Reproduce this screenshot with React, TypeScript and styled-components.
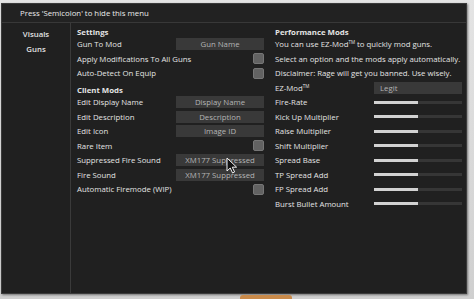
import React from "react";
import styled, { createGlobalStyle } from "styled-components";

const GlobalStyle = createGlobalStyle`
  html, body {
    margin: 0;
    padding: 0;
    background: #d4d4d4;
  }
  body {
    font-family: "Open Sans", "Liberation Sans", sans-serif;
  }
`;

const Page = styled.div`
  width: 474px;
  height: 299px;
  position: relative;
  overflow: hidden;
  background: linear-gradient(#e4e4e4, #cfcfcf);
`;

const Taskbar = styled.div`
  position: absolute;
  left: 240px;
  bottom: 0;
  width: 52px;
  height: 4px;
  background: #c98a4a;
  border-radius: 3px 3px 0 0;
`;

const Window = styled.div`
  margin-top: 3px;
  margin-left: 1px;
  width: 466px;
  height: 291px;
  background: #202020;
  border: 1px solid #3b3b3b;
  box-sizing: border-box;
  display: flex;
  flex-direction: column;
  box-shadow: 1px 1px 2px rgba(0, 0, 0, 0.45);
  color: #e4e4e4;
  font-size: 7.8px;
`;

const Header = styled.div`
  height: 18px;
  flex-shrink: 0;
  display: flex;
  align-items: center;
  padding-left: 18px;
  border-bottom: 1px solid #383838;
  background: #222;
  color: #ececec;
`;

const Body = styled.div`
  flex: 1;
  display: flex;
`;

const Sidebar = styled.div`
  width: 68px;
  flex-shrink: 0;
  border-right: 1px solid #3a3a3a;
  display: flex;
  flex-direction: column;
  align-items: center;
  padding-top: 4px;
`;

const Tab = styled.div`
  height: 14.5px;
  line-height: 14.5px;
  font-weight: 600;
`;

const Content = styled.div`
  flex: 1;
  display: grid;
  grid-template-columns: 187px 187px;
  column-gap: 11px;
  padding: 4px 0 0 6px;
  align-content: start;
`;

const Column = styled.div`
  display: flex;
  flex-direction: column;
`;

const Heading = styled.div<{ $gap?: boolean }>`
  height: 10px;
  line-height: 10px;
  font-weight: 700;
  margin-top: ${(p) => (p.$gap ? "4.5px" : "0")};
`;

const Row = styled.div`
  height: 14.5px;
  display: flex;
  align-items: center;
  justify-content: space-between;
  white-space: nowrap;
`;

const Tm = styled.sup`
  font-size: 4.5px;
  vertical-align: 3px;
  line-height: 0;
`;

const Field = styled.div<{ $left?: boolean }>`
  width: 88px;
  height: 12px;
  background: #393939;
  color: #b4b4b4;
  display: flex;
  align-items: center;
  justify-content: ${(p) => (p.$left ? "flex-start" : "center")};
  padding-left: ${(p) => (p.$left ? "6px" : "0")};
  box-sizing: border-box;
  overflow: hidden;
  white-space: nowrap;
`;

const Check = styled.div`
  width: 11px;
  height: 11px;
  border-radius: 2px;
  background: #626262;
  border: 1px solid #767676;
  box-sizing: border-box;
`;

const Track = styled.div`
  width: 88px;
  height: 3px;
  background: #363636;
  position: relative;
`;

const Fill = styled.div`
  height: 100%;
  background: #d2d2d2;
`;

const Cursor = styled.svg`
  position: absolute;
  left: 226px;
  top: 157px;
`;

type Item =
  | { label: string; kind: "field"; value: string }
  | { label: string; kind: "check" }
  | { label: string; kind: "text" };

const settings: Item[] = [
  { label: "Gun To Mod", kind: "field", value: "Gun Name" },
  { label: "Apply Modifications To All Guns", kind: "check" },
  { label: "Auto-Detect On Equip", kind: "check" },
];

const clientMods: Item[] = [
  { label: "Edit Display Name", kind: "field", value: "Display Name" },
  { label: "Edit Description", kind: "field", value: "Description" },
  { label: "Edit Icon", kind: "field", value: "Image ID" },
  { label: "Rare Item", kind: "check" },
  { label: "Suppressed Fire Sound", kind: "field", value: "XM177 Suppressed" },
  { label: "Fire Sound", kind: "field", value: "XM177 Suppressed" },
  { label: "Automatic Firemode (WIP)", kind: "check" },
];

const sliders = [
  "Fire-Rate",
  "Kick Up Multiplier",
  "Raise Multiplier",
  "Shift Multiplier",
  "Spread Base",
  "TP Spread Add",
  "FP Spread Add",
  "Burst Bullet Amount",
];

const ItemRow = ({ item }: { item: Item }) => (
  <Row>
    <span>{item.label}</span>
    {item.kind === "field" && <Field>{item.value}</Field>}
    {item.kind === "check" && <Check />}
  </Row>
);

const App = () => {
  return (
    <Page>
      <GlobalStyle />
      <Window>
        <Header>Press 'Semicolon' to hide this menu</Header>
        <Body>
          <Sidebar>
            <Tab>Visuals</Tab>
            <Tab>Guns</Tab>
          </Sidebar>
          <Content>
            <Column>
              <Heading>Settings</Heading>
              {settings.map((s) => (
                <ItemRow key={s.label} item={s} />
              ))}
              <Heading $gap>Client Mods</Heading>
              {clientMods.map((s) => (
                <ItemRow key={s.label} item={s} />
              ))}
            </Column>
            <Column>
              <Heading>Performance Mods</Heading>
              <Row>
                <span>
                  You can use EZ-Mod<Tm>TM</Tm> to quickly mod guns.
                </span>
              </Row>
              <Row>Select an option and the mods apply automatically.</Row>
              <Row>Disclaimer: Rage will get you banned. Use wisely.</Row>
              <Row>
                <span>
                  EZ-Mod<Tm>TM</Tm>
                </span>
                <Field $left>Legit</Field>
              </Row>
              {sliders.map((s) => (
                <Row key={s}>
                  <span>{s}</span>
                  <Track>
                    <Fill style={{ width: `${0.5 * 100}%` }} />
                  </Track>
                </Row>
              ))}
            </Column>
          </Content>
        </Body>
      </Window>
      <Cursor width="12" height="17" viewBox="0 0 12 17">
        <path
          d="M1 1 L1 14 L4.2 11 L6.6 16 L8.6 15 L6.3 10.2 L10.6 10.2 Z"
          fill="#111"
          stroke="#f2f2f2"
          strokeWidth="1"
          strokeLinejoin="round"
        />
      </Cursor>
      <Taskbar />
    </Page>
  );
};

export default App;
